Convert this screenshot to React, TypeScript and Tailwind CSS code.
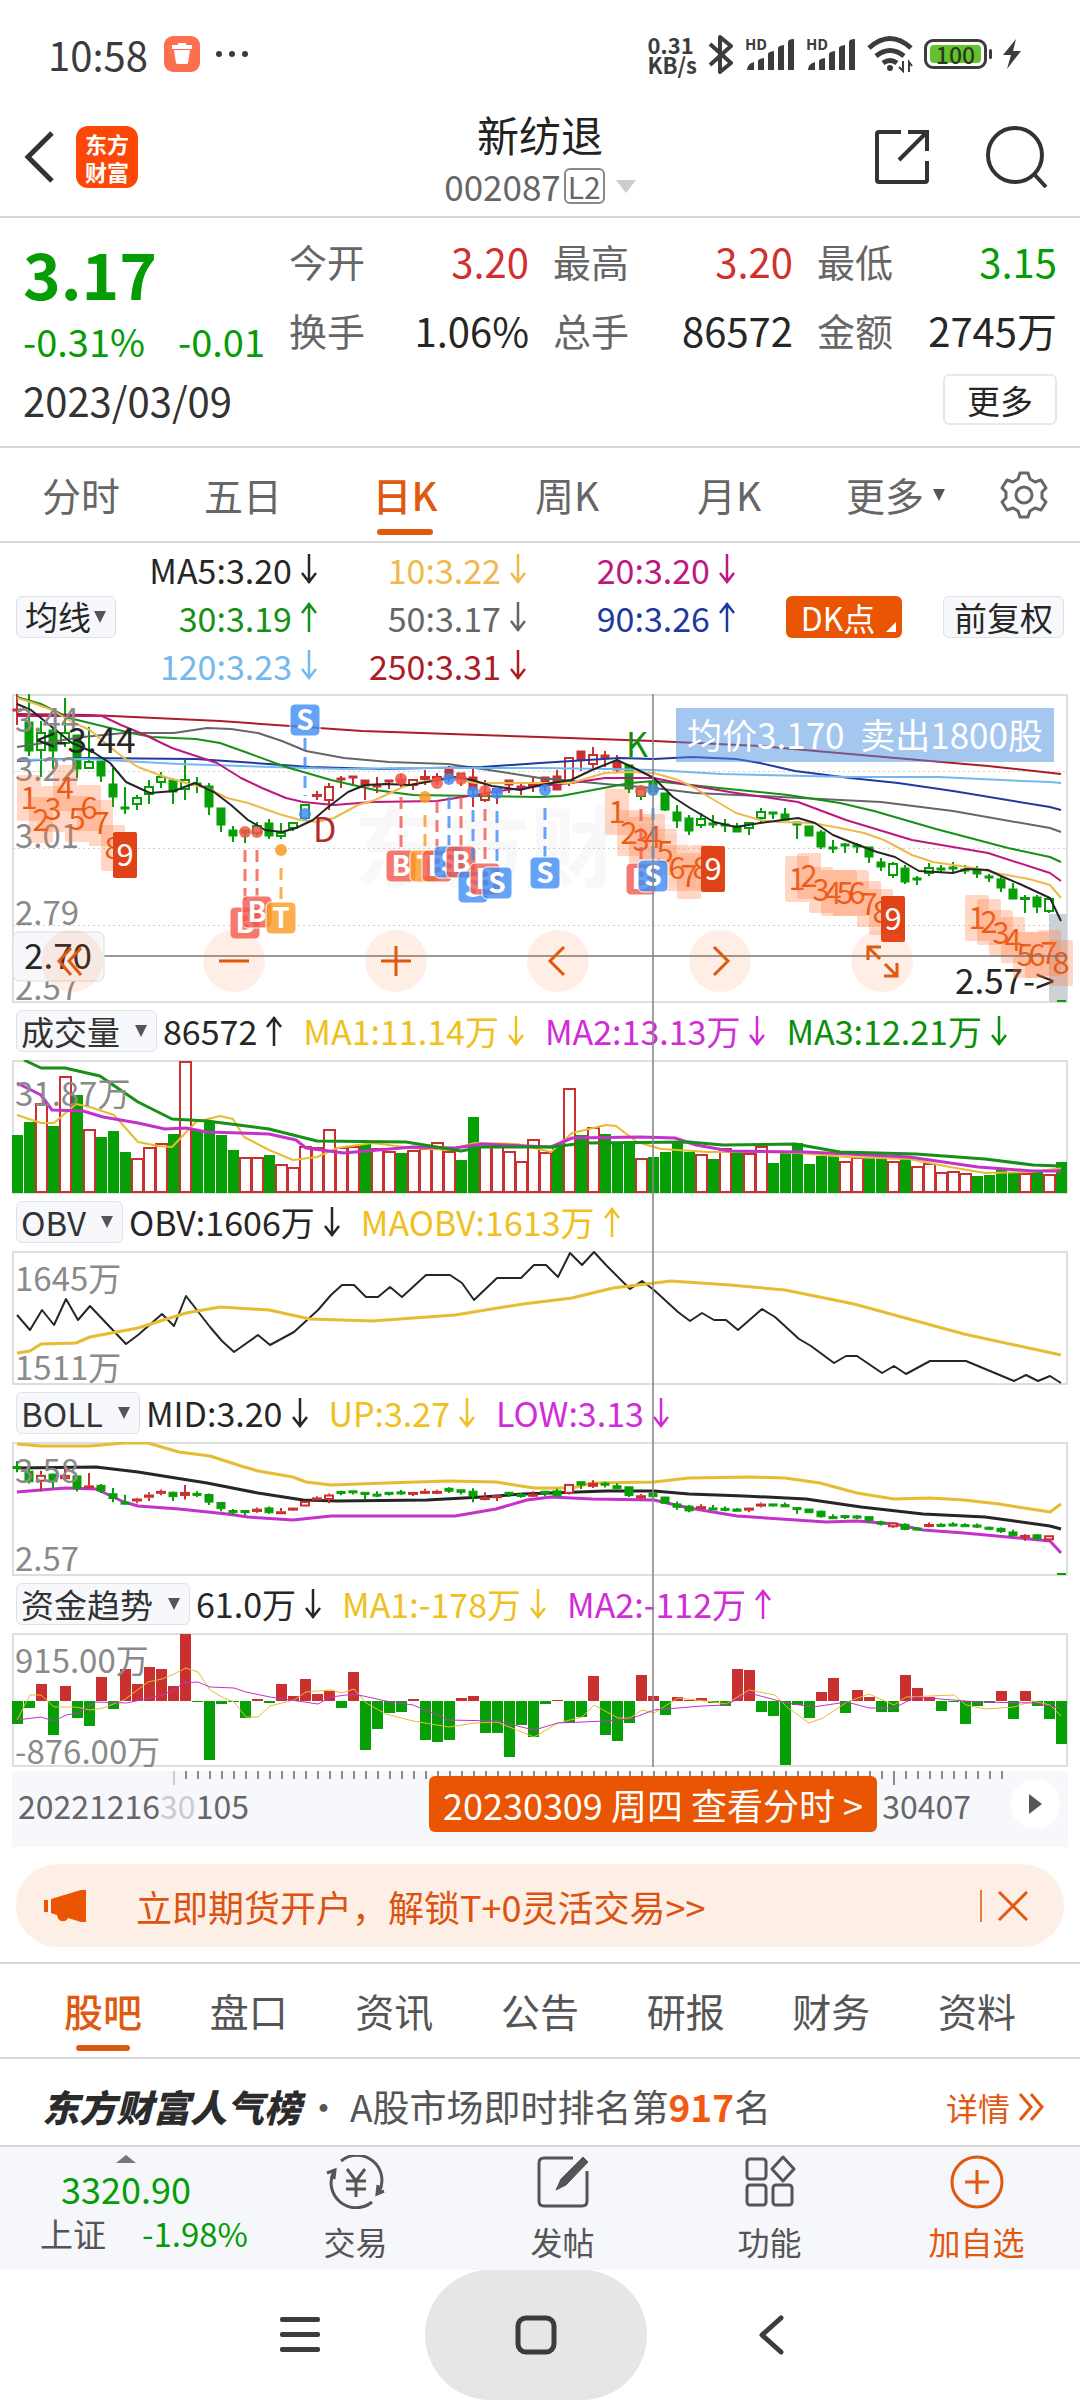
import { useState, type ReactNode } from "react";

const RED = "#c9302f";
const GREEN = "#06a006";
const YELLOW = "#e6bc30";
const PURPLE = "#c432cc";
const BLACK = "#262626";

const barX = (i: number) => 17 + i * 12;

// body top, body bottom, high, low, kind: g/r = filled, G/R = hollow
type Candle = [number, number, number, number, string];

const candles: Candle[] = [
  [15, 17, 0, 31, "r"], [28, 57, 0, 62, "g"], [38, 57, 27, 83, "G"], [36, 57, 34, 75, "g"],
  [38, 50, 4, 53, "G"], [41, 75, 41, 84, "g"], [67, 75, 33, 75, "G"], [67, 82, 63, 88, "g"],
  [90, 103, 74, 113, "g"], [113, 115, 93, 120, "g"], [103, 111, 101, 116, "G"], [92, 101, 86, 110, "G"],
  [82, 89, 78, 94, "G"], [86, 98, 84, 110, "g"], [85, 96, 66, 106, "G"], [89, 91, 83, 99, "g"],
  [92, 113, 89, 121, "g"], [114, 131, 114, 138, "g"], [136, 142, 132, 148, "g"], [136, 139, 136, 149, "g"],
  [131, 140, 128, 142, "G"], [129, 142, 125, 145, "g"], [138, 143, 129, 145, "G"], [128, 135, 128, 137, "G"],
  [110, 125, 110, 125, "G"], [100, 103, 97, 106, "R"], [92, 107, 89, 116, "R"], [84, 86, 82, 94, "r"],
  [82, 84, 82, 92, "r"], [86, 92, 86, 106, "r"], [91, 93, 83, 99, "r"], [86, 88, 86, 95, "r"],
  [85, 90, 80, 93, "r"], [85, 92, 85, 96, "R"], [82, 86, 76, 91, "R"], [82, 86, 79, 91, "R"],
  [75, 83, 72, 88, "r"], [79, 86, 79, 92, "r"], [83, 96, 75, 113, "r"], [99, 107, 86, 108, "R"],
  [94, 99, 94, 110, "R"], [86, 91, 86, 99, "r"], [92, 94, 88, 101, "r"], [90, 93, 83, 98, "R"],
  [83, 90, 83, 97, "r"], [82, 96, 76, 96, "r"], [63, 90, 63, 92, "R"], [57, 66, 57, 77, "r"],
  [60, 71, 53, 74, "R"], [61, 64, 57, 73, "r"], [68, 76, 61, 78, "r"], [71, 95, 71, 99, "g"],
  [94, 103, 91, 106, "G"], [88, 98, 85, 102, "g"], [99, 116, 99, 117, "g"], [118, 127, 111, 134, "g"],
  [124, 137, 121, 141, "g"], [124, 132, 119, 134, "G"], [129, 131, 121, 134, "g"], [130, 132, 125, 138, "g"],
  [132, 138, 129, 138, "g"], [128, 135, 128, 141, "G"], [117, 125, 114, 128, "G"], [118, 120, 118, 125, "g"],
  [120, 126, 114, 126, "g"], [128, 131, 128, 145, "g"], [132, 142, 132, 142, "g"], [138, 153, 136, 155, "g"],
  [153, 155, 146, 159, "g"], [150, 152, 149, 159, "g"], [151, 153, 149, 159, "g"], [153, 163, 153, 169, "g"],
  [168, 173, 164, 177, "g"], [169, 182, 168, 184, "G"], [174, 188, 171, 190, "g"], [184, 186, 182, 191, "g"],
  [173, 180, 169, 182, "G"], [174, 176, 171, 179, "g"], [173, 175, 168, 179, "g"], [175, 177, 171, 180, "g"],
  [176, 180, 172, 184, "g"], [182, 184, 180, 188, "g"], [185, 194, 183, 198, "g"], [195, 205, 189, 205, "g"],
  [203, 205, 201, 219, "G"], [203, 213, 201, 219, "g"], [204, 218, 204, 219, "G"],
];

const movingAverages = [
  { color: "#ab1e28", points: "17,20 90,21 220,27 362,37 540,43 654,47 760,52 884,63 988,72 1061,80" },
  { color: "#666666", points: "17,53 83,43 124,39 174,39 207,34 231,35 258,39 282,47 306,57 344,64 389,68 448,70 489,76 540,84 616,91 654,94 695,99 781,103 881,108 953,117 1050,134 1061,138" },
  { color: "#1f3a9e", points: "17,67 86,64 196,65 241,68 310,73 379,75 482,73 540,69 619,64 654,65 692,63 736,65 760,69 795,77 850,84 898,89 953,97 1050,113 1061,116" },
  { color: "#74b9ee", points: "17,66 86,65 179,70 241,72 344,75 413,74 540,74 609,75 654,76 722,80 850,83 939,83 1022,87 1050,88 1061,89" },
  { color: "#179017", points: "17,3 41,10 69,24 131,39 152,43 196,45 220,49 248,59 286,73 331,86 375,96 413,101 540,103 561,102 609,93 630,89 654,87 719,94 788,101 840,109 874,117 936,135 1008,154 1050,163 1061,168" },
  { color: "#bd1880", points: "17,22 102,22 121,31 145,41 172,54 217,69 241,84 262,94 286,104 303,108 334,111 372,108 437,107 475,101 506,96 540,92 571,89 605,84 654,84 688,91 736,99 798,108 846,126 912,146 988,159 1050,179 1061,187" },
  { color: "#f0b94e", points: "17,4 33,9 52,16 72,28 90,36 110,53 124,64 138,73 165,83 193,91 207,94 227,104 248,109 279,120 300,126 317,128 334,124 358,111 375,106 403,93 420,88 448,84 475,89 540,89 571,89 605,79 630,78 654,79 678,86 695,94 709,103 736,119 760,126 778,128 812,129 840,134 864,139 884,146 912,161 933,168 974,174 1001,180 1029,185 1050,191 1061,204" },
  { color: BLACK, points: "17,10 31,16 52,33 72,49 93,58 110,69 126,88 150,99 174,97 195,89 214,98 231,111 248,126 265,136 282,138 296,134 313,126 327,114 348,98 365,91 386,90 410,91 427,88 455,83 472,86 492,92 520,96 540,91 571,86 592,76 617,66 630,72 654,84 673,103 690,114 714,128 736,133 760,129 798,124 815,129 833,141 853,149 877,158 895,163 919,177 953,179 967,175 988,176 1001,182 1022,191 1050,204 1061,227" },
];

// x, dot y, badge y, label
const trades: [number, number, number, string][] = [
  [305, 120, 26, "S"], [245, 138, 229, "B"], [257, 138, 218, "B"], [281, 156, 224, "T"],
  [401, 85, 172, "B"], [425, 103, 172, "T"], [437, 89, 172, "B"], [449, 85, 168, "S"],
  [461, 85, 168, "B"], [473, 98, 193, "S"], [485, 97, 185, "B"], [497, 99, 189, "S"],
  [545, 96, 179, "S"], [641, 97, 185, "B"], [653, 96, 182, "S"],
];

const tradeColor: Record<string, string> = { S: "#3f8cf4", B: "#f2574a", T: "#fb9a22" };

// each run counts 1..9, given as the x of its first digit and the y of each
const countdowns: [number, number[]][] = [
  [29, [104, 126, 115, 94, 125, 114, 129, 154, 161]],
  [617, [118, 139, 146, 143, 158, 174, 182, 174, 175]],
  [797, [185, 182, 196, 199, 199, 199, 210, 218, 225]],
  [977, [224, 228, 239, 246, 261, 261, 259, 269]],
];

const volumes =
  "g75 g62 r43 g66 r16 g35 r69 g77 g71 g92 r98 r87 r83 g74 r1 g70 g61 g75 g90 r97 r97 g95 r104 r107 r86 r87 r69 r87 r86 g84 r88 r91 g93 r90 r88 r82 r91 g100 g57 r86 r83 r91 r101 r79 r92 g86 r28 g75 r67 g74 g83 g81 r98 g97 g92 g83 g92 r94 g99 r88 g93 r93 r86 g103 g92 g83 g104 g96 g96 r101 r97 g98 g99 r101 g99 r106 r103 r112 r111 r113 g116 g115 g110 g113 r113 g112 r114 g102"
    .split(" ")
    .map((v) => ({ up: v[0] === "r", top: Number(v.slice(1)) }));

const flows = [
  91, 75, 51, 102, 53, 85, 93, 44, 76, 36, 51, 34, 36, 53, 1, 69, 127, 71, 69, 85, 66, 70, 51, 63, 46, 61, 58, 75, 39,
  117, 96, 80, 79, 66, 107, 109, 107, 65, 63, 100, 100, 124, 92, 104, 71, 67, 90, 84, 43, 102, 108, 90, 42, 63, 82, 64,
  67, 65, 70, 73, 36, 37, 79, 83, 132, 72, 85, 59, 45, 80, 57, 64, 79, 79, 42, 55, 64, 78, 69, 91, 73, 70, 58, 86, 58,
  73, 86, 111,
];

function Arrow({ up }: { up?: boolean }) {
  return (
    <svg viewBox="0 0 18 32" className="h-8 w-[18px] shrink-0" fill="none" stroke="currentColor" strokeWidth="2.5">
      <path d={up ? "M9 31V2M2 12l7-9 7 9" : "M9 1v29M2 20l7 9 7-9"} />
    </svg>
  );
}

function Caret() {
  return (
    <svg viewBox="0 0 14 12" className="h-3 w-[14px] shrink-0" fill="#555">
      <path d="M1 0h12L7 12z" />
    </svg>
  );
}

function Line({ points, color, width = 2 }: { points: string; color: string; width?: number }) {
  return <polyline points={points} fill="none" stroke={color} strokeWidth={width} strokeLinejoin="round" />;
}

function Frame({ height, children }: { height: number; children: ReactNode }) {
  return (
    <svg viewBox={`0 0 1080 ${height}`} className="block w-full">
      <rect x="13" y="1" width="1054" height={height - 2} fill="none" stroke="#dedede" strokeWidth="2" />
      {children}
    </svg>
  );
}

function AxisText({ y, children }: { y: number; children: string }) {
  return (
    <text x="15" y={y} fontSize="33" fill="#8a8a8a">
      {children}
    </text>
  );
}

function CandleShape({ i, c, map = (y) => y, boll }: { i: number; c: Candle; map?: (y: number) => number; boll?: boolean }) {
  const [top, bottom, high, low, kind] = c;
  const hollow = kind === "G" || kind === "R";
  const red = boll ? hollow : kind.toLowerCase() === "r";
  const color = red ? RED : GREEN;
  const x = barX(i);
  const y = map(top);
  const h = Math.max(map(bottom) - y, 2);
  return (
    <g stroke={color} strokeWidth="2">
      <path d={`M${x} ${map(high)}V${y}M${x} ${y + h}V${map(low)}`} />
      {hollow ? (
        <rect x={x - 4} y={y + 1} width="8" height={Math.max(h - 2, 1)} fill="#fff" />
      ) : (
        <rect x={x - 4} y={y} width="8" height={h} fill={color} strokeWidth="1" />
      )}
    </g>
  );
}

function PriceChart() {
  return (
    <Frame height={309}>
      <text x="354" y="186" fontSize="88" fontWeight="700" fill="#f8f8f8">
        东方财富
      </text>
      <g stroke="#cfcfcf" strokeDasharray="2 3">
        <path d="M13 77.5H1067M13 154.5H1067M13 231.5H1067" />
      </g>
      <rect x="1049" y="220" width="18" height="88" fill="#cdd1d8" />
      {candles.map((c, i) => (
        <CandleShape key={i} i={i} c={c} />
      ))}
      <path d="M1057 307h9" stroke={GREEN} strokeWidth="2" />
      {movingAverages.map((m) => (
        <Line key={m.color} {...m} />
      ))}
      <AxisText y={38}>3.44</AxisText>
      <AxisText y={87}>3.22</AxisText>
      <AxisText y={154}>3.01</AxisText>
      <AxisText y={231}>2.79</AxisText>
      <AxisText y={306}>2.57</AxisText>
      <g fontSize="35" fill={BLACK}>
        <text x="36" y="59">&lt;-3.44</text>
        <text x="955" y="300">2.57-&gt;</text>
      </g>
      <g fontSize="31" textAnchor="middle">
        {countdowns.map(([start, ys]) =>
          ys.map((y, n) => {
            const x = start + n * 12;
            const last = n === 8;
            return (
              <g key={x}>
                <rect x={x - 12} y={y - 23} width="24" height="46" rx="2" fill={last ? "#e04318" : "#ff7a3c"} fillOpacity={last ? 1 : 0.3} />
                <text x={x} y={y + 11} fill={last ? "#fff" : "#ea5a14"}>
                  {n + 1}
                </text>
              </g>
            );
          }),
        )}
      </g>
      <text x="313" y="148" fontSize="34" fill="#b52a2a">D</text>
      <text x="626" y="63" fontSize="34" fill="#0f8f0f">K</text>
      {trades.map(([x, dot, badge, label]) => {
        const color = tradeColor[label];
        const below = badge > dot;
        return (
          <g key={x}>
            <circle cx={x} cy={dot} r="6" fill={color} fillOpacity="0.85" />
            <path
              d={below ? `M${x} ${dot + 18}V${badge - 16}` : `M${x} ${badge + 18}V${dot - 18}`}
              stroke={color}
              strokeOpacity="0.8"
              strokeWidth="3"
              strokeDasharray="12 7"
            />
            <rect x={x - 15} y={badge - 16} width="30" height="32" rx="5" fill={color} fillOpacity="0.8" stroke="#fff" />
            <text x={x} y={badge + 10} fontSize="28" fontWeight="700" fill="#fff" textAnchor="middle">
              {label}
            </text>
          </g>
        );
      })}
      <path d="M13 262H1067" stroke="#777" strokeWidth="1.5" />
      <rect x="13" y="238" width="91" height="49" rx="6" fill="#f6f8fb" stroke="#d9dde2" />
      <text x="24" y="275" fontSize="35" fill={BLACK}>2.70</text>
    </Frame>
  );
}

function VolumeChart() {
  return (
    <Frame height={134}>
      {volumes.map(({ up, top }, i) =>
        up ? (
          <rect key={i} x={barX(i) - 5} y={top + 1} width="11" height={131 - top} fill="#fff" stroke={RED} strokeWidth="2" />
        ) : (
          <rect key={i} x={barX(i) - 5} y={top} width="11" height={133 - top} fill={GREEN} />
        ),
      )}
      <Line color={YELLOW} points="17,55 41,63 54,63 76,44 90,47 114,55 138,82 158,86 172,87 196,62 220,56 233,59 244,77 269,90 293,100 317,97 337,88 372,83 413,88 448,90 475,83 517,84 551,92 572,73 606,65 616,66 637,82 661,89 709,92 758,92 799,93 847,97 909,99 950,107 985,113 1033,112 1061,108" />
      <Line color={PURPLE} width={3} points="17,23 41,35 52,50 83,51 103,57 138,63 165,69 186,68 207,72 269,74 296,80 306,88 344,93 413,87 455,88 482,84 551,87 572,78 640,77 675,78 696,85 730,91 806,92 909,97 978,107 1033,111 1061,111" />
      <Line color="#179017" width={3} points="24,0 41,8 65,8 100,16 138,42 158,52 172,59 207,61 269,69 317,81 406,82 461,91 482,87 551,87 585,83 689,82 723,85 795,84 840,92 916,94 985,99 1033,105 1061,106" />
      <AxisText y={46}>31.87万</AxisText>
    </Frame>
  );
}

function ObvChart() {
  return (
    <Frame height={134}>
      <AxisText y={40}>1645万</AxisText>
      <AxisText y={129}>1511万</AxisText>
      <Line color={BLACK} points="17,64 30,79 42,59 54,74 66,48 78,69 90,55 126,93 138,84 162,63 174,75 186,45 210,76 222,90 234,101 258,84 270,94 294,81 318,59 331,44 342,34 354,34 366,46 378,46 390,36 402,46 426,24 450,24 462,32 474,49 497,27 521,27 534,14 546,14 558,26 570,2 582,14 594,1 606,14 630,38 642,30 654,39 678,61 690,70 702,62 714,69 726,69 738,79 762,58 775,66 799,88 811,95 834,112 846,105 857,105 882,122 894,115 906,123 930,110 966,110 978,115 1014,130 1026,124 1038,130 1050,125 1061,132" />
      <Line color={YELLOW} width={3} points="17,102 30,100 41,93 76,92 90,86 138,77 186,62 220,56 269,59 310,68 372,70 455,64 523,53 572,47 613,37 671,30 730,34 785,39 854,53 964,83 1061,104" />
    </Frame>
  );
}

function BollChart() {
  return (
    <Frame height={134}>
      <Line color={BLACK} width={3} points="17,26 96,25 138,30 207,41 258,51 303,58 337,59 427,58 482,55 523,52 606,49 654,49 689,52 744,54 806,57 861,65 923,72 985,75 1050,84 1061,87" />
      <Line color={YELLOW} width={3} points="17,2 41,4 90,4 124,1 148,1 179,10 210,14 241,24 258,29 293,35 306,40 331,43 386,41 448,39 496,40 534,46 572,46 592,41 654,40 689,36 751,35 785,36 820,41 857,51 894,57 930,56 964,58 999,62 1050,70 1061,62" />
      <Line color={PURPLE} width={3} points="17,50 65,46 96,47 124,60 138,64 179,67 227,72 248,75 293,78 331,74 455,74 496,67 527,58 551,55 592,57 654,58 689,66 737,74 826,80 857,79 895,82 923,88 964,91 1050,99 1061,111" />
      {candles.map((c, i) => (
        <CandleShape key={i} i={i} c={c} map={(y) => 19 + y * 0.364} boll />
      ))}
      <path d="M1057 132h9" stroke={GREEN} strokeWidth="2" />
      <AxisText y={41}>3.58</AxisText>
      <AxisText y={129}>2.57</AxisText>
    </Frame>
  );
}

function FlowChart() {
  return (
    <Frame height={134}>
      {flows.map((y, i) => (
        <rect key={i} x={barX(i) - 5} y={Math.min(y, 68)} width="11" height={Math.abs(y - 68)} fill={y < 68 ? RED : GREEN} />
      ))}
      <Line color={YELLOW} width={1} points="17,87 30,62 41,62 54,74 76,74 90,77 103,75 124,67 148,49 162,46 174,41 186,35 198,39 210,57 222,64 234,69 246,84 258,84 270,73 294,67 306,59 331,57 342,60 354,56 366,70 386,81 413,88 449,94 475,90 497,89 534,104 558,90 582,84 594,72 618,85 630,85 642,77 654,80 678,65 714,69 726,71 749,57 775,62 787,74 809,90 823,85 847,69 869,61 894,72 906,64 954,62 966,72 985,76 1014,74 1033,68 1050,72 1061,83" />
      <Line color={PURPLE} width={1} points="17,87 41,84 54,88 66,82 78,80 96,69 127,70 162,62 174,57 183,50 198,49 210,54 234,55 246,59 270,64 318,71 331,64 354,61 386,68 413,72 449,87 497,88 534,97 558,90 606,88 630,86 654,77 702,73 726,72 749,60 787,70 813,74 847,69 869,75 894,75 916,64 978,69 1033,70 1061,75" />
      <AxisText y={40}>915.00万</AxisText>
      <AxisText y={131}>-876.00万</AxisText>
    </Frame>
  );
}

interface LegendItem {
  text: string;
  up?: boolean;
  className: string;
}

function Panel({ name, items, children }: { name: string; items: LegendItem[]; children: ReactNode }) {
  return (
    <section>
      <div className="flex h-[57px] items-center gap-5 pb-[2px] pl-4 text-[34px] leading-10">
        <div className="flex items-center gap-[6px]">
          <button className="flex h-[42px] items-center gap-[14px] rounded-md border border-[#dfe2e6] bg-[#f6f8fb] pl-1 pr-2 text-[33px] text-[#333]">
            {name}
            <Caret />
          </button>
          <LegendText {...items[0]} />
        </div>
        {items.slice(1).map((item) => (
          <LegendText key={item.text} {...item} />
        ))}
      </div>
      {children}
    </section>
  );
}

function LegendText({ text, up, className }: LegendItem) {
  return (
    <span className={`flex items-center gap-2 whitespace-nowrap ${className}`}>
      {text}
      <Arrow up={up} />
    </span>
  );
}

function StatusBar() {
  return (
    <div className="flex h-[108px] items-center justify-between pl-12 pr-[59px] text-[#3c3c3c]">
      <div className="flex items-center gap-4">
        <span className="text-[40px] leading-10">10:58</span>
        <svg viewBox="0 0 36 36" className="size-9">
          <rect width="36" height="36" rx="9" fill="#fc7050" />
          <path d="M8 9h20v4H8zM14 7h8v3h-8zM10 14h16l-2 13q0 1-2 1h-8q-2 0-2-1z" fill="#fff" />
        </svg>
        <svg viewBox="0 0 34 6" className="h-[6px] w-[34px]" fill="currentColor">
          <circle cx="3" cy="3" r="3" />
          <circle cx="16" cy="3" r="3" />
          <circle cx="29" cy="3" r="3" />
        </svg>
      </div>
      <div className="flex items-center gap-[11px]">
        <div className="text-[22px] font-bold leading-5">
          0.31
          <br />
          KB/s
        </div>
        <svg viewBox="0 0 26 40" className="h-10 w-[26px]" fill="none" stroke="currentColor" strokeWidth="4" strokeLinejoin="round">
          <path d="M2 10l21 19-11 9V3l11 9L2 31" />
        </svg>
        <Signal />
        <Signal />
        <svg viewBox="0 0 46 38" className="h-[38px] w-[46px]" fill="none" stroke="currentColor" strokeWidth="5">
          <path d="M2 13q21-19 42 0M9 21q14-11 28 0M16 28q7-5 14 0" />
          <circle cx="23" cy="33" r="3" fill="currentColor" stroke="none" />
          <path d="M36 26v10l-4-4M42 37V27l3 4" strokeWidth="2" />
        </svg>
        <div className="flex items-center gap-[2px]">
          <div className="flex h-[30px] w-[63px] items-center rounded-[9px] border-3 border-[#3c3c3c] p-[3px]">
            <span className="flex h-full w-full items-center justify-center rounded-[4px] bg-[#64c32c] text-[23px] font-medium leading-5 text-[#2b3b22]">
              100
            </span>
          </div>
          <span className="h-[10px] w-[3px] rounded-full bg-[#3c3c3c]" />
        </div>
        <svg viewBox="0 0 18 30" className="h-[30px] w-[18px]" fill="currentColor">
          <path d="M13 0L0 16h8L4 30 18 12h-8z" />
        </svg>
      </div>
    </div>
  );
}

function Signal() {
  return (
    <div className="relative h-9 w-[50px]">
      <svg viewBox="0 0 50 36" className="h-9 w-[50px]" fill="currentColor">
        <path d="M2 34q0-6 7-8v8zM13 34V25q0-2 6-3v12zM23 34V18q0-2 6-3v19zM33 34V12q0-2 6-3v25zM43 34V6q0-3 6-3v31z" />
      </svg>
      <span className="absolute left-0 top-0 text-[15px] font-bold leading-4">HD</span>
    </div>
  );
}

function Header() {
  return (
    <header className="grid h-[110px] grid-cols-3 items-center border-b-2 border-[#d8d8d8] px-6 pb-3">
      <div className="flex items-center gap-[22px]">
        <button aria-label="返回">
          <svg viewBox="0 0 30 52" className="h-[52px] w-[30px]" fill="none" stroke="#333" strokeWidth="5">
            <path d="M28 2L4 26l24 24" />
          </svg>
        </button>
        <div className="w-[62px] rounded-xl bg-[#fd4706] py-[3px] text-center text-[22px] font-bold leading-7 text-white">
          东方
          <br />
          财富
        </div>
      </div>
      <div className="flex flex-col items-center gap-[6px]">
        <h1 className="text-[42px] leading-[52px] text-[#222]">新纺退</h1>
        <button className="flex items-center gap-[3px] text-[35px] leading-10 text-[#666]">
          002087
          <span className="rounded-md border-2 border-[#888] px-[2px] text-[30px] leading-8">L2</span>
          <svg viewBox="0 0 20 13" className="ml-2 h-[13px] w-5" fill="#ccc">
            <path d="M0 0h20L10 13z" />
          </svg>
        </button>
      </div>
      <div className="flex items-center justify-end gap-14 pr-[7px]">
        <button aria-label="分享">
          <svg viewBox="0 0 54 54" className="size-[54px]" fill="none" stroke="#333" strokeWidth="4">
            <path d="M26 2H4q-2 0-2 2v46q0 2 2 2h46q2 0 2-2V31M33 2h19v19M52 2L24 30" />
          </svg>
        </button>
        <button aria-label="搜索">
          <svg viewBox="0 0 64 64" className="size-16" fill="none" stroke="#333" strokeWidth="4">
            <circle cx="30" cy="30" r="27" />
            <path d="M49 49l12 13" />
          </svg>
        </button>
      </div>
    </header>
  );
}

const quotes = [
  { label: "今开", value: "3.20", className: "text-[#d2302f]" },
  { label: "最高", value: "3.20", className: "text-[#d2302f]" },
  { label: "最低", value: "3.15", className: "text-[#069c06]" },
  { label: "换手", value: "1.06%", className: "text-[#262626]" },
  { label: "总手", value: "86572", className: "text-[#262626]" },
  { label: "金额", value: "2745万", className: "text-[#262626]" },
];

function Quote() {
  return (
    <section className="border-b-2 border-[#d8d8d8] px-[23px] pb-[21px] pt-2">
      <div className="flex gap-6">
        <div className="w-[242px] shrink-0 text-[#069c06]">
          <div className="text-[64px] font-bold leading-[92px]">3.17</div>
          <div className="flex justify-between text-[38px] leading-[46px]">
            <span>-0.31%</span>
            <span>-0.01</span>
          </div>
        </div>
        <dl className="grid grow grid-cols-3 gap-x-6">
          {quotes.map((q) => (
            <div key={q.label} className="flex h-[69px] items-center justify-between">
              <dt className="text-[38px] text-[#666]">{q.label}</dt>
              <dd className={`text-[40px] ${q.className}`}>{q.value}</dd>
            </div>
          ))}
        </dl>
      </div>
      <div className="flex items-center justify-between pt-[10px]">
        <span className="text-[40px] leading-10 text-[#333]">2023/03/09</span>
        <button className="h-[51px] w-[114px] rounded-md border-2 border-[#e6e8ea] text-[33px] leading-8 text-[#262626]">更多</button>
      </div>
    </section>
  );
}

function ChartTabs() {
  const [active, setActive] = useState("日K");
  return (
    <nav className="flex h-[95px] items-center border-b-2 border-[#d8d8d8] text-[39px] text-[#666]">
      {["分时", "五日", "日K", "周K", "月K"].map((t) => (
        <button
          key={t}
          onClick={() => setActive(t)}
          className={`relative flex h-full w-[15%] items-center justify-center ${t === active ? "font-medium text-[#df5a11]" : ""}`}
        >
          {t}
          {t === active && <span className="absolute bottom-[6px] h-[6px] w-14 rounded-full bg-[#df5a11]" />}
        </button>
      ))}
      <button className="ml-9 flex items-center gap-2">
        更多
        <Caret />
      </button>
      <button aria-label="设置" className="ml-auto mr-8">
        <svg viewBox="0 0 48 48" className="size-12" fill="none" stroke="#666" strokeWidth="3" strokeLinejoin="round">
          <path d="M20 2h8l2 6 5 3 6-2 5 8-4 4v6l4 4-5 8-6-2-5 3-2 6h-8l-2-6-5-3-6 2-5-8 4-4v-6l-4-4 5-8 6 2 5-3z" />
          <circle cx="24" cy="24" r="8" />
        </svg>
      </button>
    </nav>
  );
}

const averages: LegendItem[] = [
  { text: "MA5:3.20", className: "text-[#262626]" },
  { text: "10:3.22", className: "text-[#f0b94e]" },
  { text: "20:3.20", className: "text-[#bd1880]" },
  { text: "30:3.19", up: true, className: "text-[#179017]" },
  { text: "50:3.17", className: "text-[#666]" },
  { text: "90:3.26", up: true, className: "text-[#1f3a9e]" },
  { text: "120:3.23", className: "text-[#74b9ee]" },
  { text: "250:3.31", className: "text-[#ab1e28]" },
];

function AverageLegend() {
  return (
    <div className="flex items-center px-4 pb-[5px] pt-[2px]">
      <button className="flex h-[42px] items-center gap-[2px] whitespace-nowrap rounded-md border border-[#dfe2e6] bg-[#f6f8fb] px-2 text-[33px] text-[#262626]">
        均线
        <Caret />
      </button>
      <div className="grid grid-cols-[202px_209px_209px] text-[34px]">
        {averages.map((a) => (
          <div key={a.text} className="flex h-12 items-center justify-end">
            <LegendText {...a} />
          </div>
        ))}
      </div>
      <button className="relative ml-[50px] h-[42px] w-[116px] whitespace-nowrap rounded-md bg-[#ea5504] pr-3 text-[32px] leading-10 text-white">
        DK点
        <span className="absolute bottom-[6px] right-[6px] border-b-10 border-l-10 border-b-white border-l-transparent" />
      </button>
      <button className="ml-auto h-[42px] whitespace-nowrap rounded-md border border-[#dfe2e6] bg-[#f6f8fb] px-[10px] text-[33px] leading-10 text-[#262626]">
        前复权
      </button>
    </div>
  );
}

const chartButtons = [
  { label: "最左", d: "M30 18L18 31l12 14M40 18L28 31l12 14" },
  { label: "缩小", d: "M16 31h30" },
  { label: "放大", d: "M16 31h30M31 16v30" },
  { label: "左移", d: "M37 17L23 31l14 14" },
  { label: "右移", d: "M25 17l14 14-14 14" },
  { label: "全屏", d: "M17 30V17h13M17 17l12 12M46 33v13H33M46 46L34 34" },
];

function ChartControls() {
  return (
    <div className="absolute bottom-[11px] left-[41px] flex gap-[100px]">
      {chartButtons.map((b) => (
        <button key={b.label} aria-label={b.label} className="size-[62px] rounded-full bg-[#ff7030]/12">
          <svg viewBox="0 0 62 62" fill="none" stroke="#e0590f" strokeWidth="3">
            <path d={b.d} />
          </svg>
        </button>
      ))}
    </div>
  );
}

function TimeAxis() {
  const ticks = Array.from({ length: 70 }, (_, n) => 174 + n * 12);
  return (
    <div className="relative mx-3 mt-1 h-[76px] bg-[#f7f8fb]">
      <svg viewBox="12 0 1056 14" className="block w-full" stroke="#8a8a8a" strokeWidth="2">
        {ticks.map((x, n) => (
          <path key={x} d={`M${x} 0v${n % 30 === 0 ? 14 : 8}`} strokeOpacity={n === 0 ? 0.4 : 1} />
        ))}
      </svg>
      <div className="flex items-center pl-[6px] text-[32px] leading-[40px] text-[#666]">
        <span>20221216</span>
        <span>
          <span className="opacity-30">30</span>105
        </span>
      </div>
      <span className="absolute right-[97px] top-[14px] text-[32px] leading-[40px] text-[#666]">30407</span>
      <button className="absolute left-[417px] top-[5px] h-14 w-[448px] whitespace-nowrap rounded-md bg-[#ea5504] text-[36px] leading-[48px] text-white">
        20230309 周四 查看分时 &gt;
      </button>
      <button aria-label="播放" className="absolute right-2 top-2 size-[50px] rounded-full bg-white">
        <svg viewBox="0 0 50 50" fill="#555">
          <path d="M19 15l13 10-13 10z" />
        </svg>
      </button>
    </div>
  );
}

function Banner() {
  return (
    <div className="mx-4 mb-[15px] mt-[17px] flex h-[83px] items-center rounded-full bg-[#fdeee6] pl-7 pr-9 text-[#dc5310]">
      <svg viewBox="0 0 42 34" className="h-[34px] w-[42px]" fill="#ea5504">
        <path d="M0 11h4v12H0zM7 10L37 1h5v32h-5L24 29q-2 4-6 3-4 0-5-6l-6-2z" />
      </svg>
      <a href="#" className="ml-[50px] grow text-[36px]">
        立即期货开户，解锁T+0灵活交易&gt;&gt;
      </a>
      <span className="mr-4 h-8 w-[2px] bg-[#ea7a3c]" />
      <button aria-label="关闭">
        <svg viewBox="0 0 30 30" className="size-[30px]" fill="none" stroke="#e0590f" strokeWidth="3">
          <path d="M1 1l28 28M29 1L1 29" />
        </svg>
      </button>
    </div>
  );
}

function InfoTabs() {
  const [active, setActive] = useState("股吧");
  return (
    <nav className="flex h-[97px] justify-between border-y-2 border-[#d8d8d8] px-16 text-[39px] text-[#555]">
      {["股吧", "盘口", "资讯", "公告", "研报", "财务", "资料"].map((t) => (
        <button
          key={t}
          onClick={() => setActive(t)}
          className={`relative flex h-full items-center ${t === active ? "font-medium text-[#df5a11]" : ""}`}
        >
          {t}
          {t === active && <span className="absolute inset-x-3 bottom-[6px] h-[6px] rounded-full bg-[#df5a11]" />}
        </button>
      ))}
    </nav>
  );
}

function Ranking() {
  return (
    <div className="flex h-[88px] items-center border-b-2 border-[#d8d8d8] pl-[42px] pr-9 pt-[10px] text-[37px] text-[#555]">
      <strong className="font-black italic text-[#2b2b2b]">东方财富人气榜</strong>
      <span className="px-1">·</span>
      <span className="grow pl-1">
        A股市场即时排名第<b className="text-[#f25a14]">917</b>名
      </span>
      <a href="#" className="flex items-center gap-2 text-[32px] text-[#e0590f]">
        详情
        <svg viewBox="0 0 26 28" className="h-7 w-[26px]" fill="none" stroke="currentColor" strokeWidth="3">
          <path d="M2 1l11 13L2 27M13 1l11 13-11 13" />
        </svg>
      </a>
    </div>
  );
}

function ActionButton({ label, accent, children }: { label: string; accent?: boolean; children: ReactNode }) {
  return (
    <button className={`flex flex-1 flex-col items-center gap-2 pt-2 text-[32px] leading-[48px] ${accent ? "text-[#e0590f]" : "text-[#555]"}`}>
      <svg viewBox="0 0 60 54" className="h-[54px] w-[60px]" fill="none" stroke="currentColor" strokeWidth="3">
        {children}
      </svg>
      {label}
    </button>
  );
}

function BottomBar() {
  return (
    <footer className="flex h-[123px] bg-[#f6f7fa]">
      <button className="flex w-[252px] flex-col items-center text-[#069c06]">
        <svg viewBox="0 0 20 8" className="mt-2 h-2 w-5" fill="#777">
          <path d="M10 0l10 8H0z" />
        </svg>
        <span className="text-[36px] leading-[50px]">3320.90</span>
        <span className="flex w-full justify-between pl-10 pr-1 text-[33px] leading-10">
          <span className="text-[#555]">上证</span>
          <span>-1.98%</span>
        </span>
      </button>
      <ActionButton label="交易">
        <path d="M15 6a25 25 0 0 1 38 31M46 47A25 25 0 0 1 8 16M1 18l8-3-1 9M58 36l-7 3 1-9M21 14l9 12 9-12M30 26v16M20 26h20M20 34h20" />
      </ActionButton>
      <ActionButton label="发帖">
        <path d="M40 3H11q-5 0-5 5v38q0 5 5 5h38q5 0 5-5V16" />
        <path d="M23 35l5-11L50 2l5 5-22 23z" fill="currentColor" strokeWidth="1" />
      </ActionButton>
      <ActionButton label="功能">
        <rect x="7" y="4" width="19" height="20" rx="3" />
        <rect x="7" y="30" width="19" height="20" rx="3" />
        <rect x="33" y="30" width="19" height="20" rx="3" />
        <path d="M43 2l11 12-11 12-11-12z" strokeLinejoin="round" />
      </ActionButton>
      <ActionButton label="加自选" accent>
        <circle cx="30" cy="27" r="25" />
        <path d="M18 27h24M30 15v24" />
      </ActionButton>
    </footer>
  );
}

function SystemNav() {
  return (
    <div className="flex h-[130px] items-center justify-center bg-white pr-4">
      <button aria-label="菜单" className="mr-[105px]">
        <svg viewBox="0 0 40 36" className="h-9 w-10" fill="#3c3c3c">
          <rect width="40" height="5" rx="2" />
          <rect y="15" width="40" height="5" rx="2" />
          <rect y="30" width="40" height="5" rx="2" />
        </svg>
      </button>
      <button aria-label="主页" className="flex h-full w-[222px] items-center justify-center rounded-full bg-[#e6e6e6]">
        <svg viewBox="0 0 42 40" className="h-10 w-[42px]" fill="none" stroke="#3c3c3c" strokeWidth="5">
          <rect x="3" y="3" width="36" height="34" rx="8" />
        </svg>
      </button>
      <button aria-label="返回" className="ml-[111px]">
        <svg viewBox="0 0 26 40" className="h-10 w-[26px]" fill="none" stroke="#3c3c3c" strokeWidth="5" strokeLinecap="round" strokeLinejoin="round">
          <path d="M23 3L4 20l19 17" />
        </svg>
      </button>
    </div>
  );
}

export default function App() {
  return (
    <main className="bg-white font-['Noto_Sans_CJK_SC',sans-serif] text-[#262626]">
      <StatusBar />
      <Header />
      <Quote />
      <ChartTabs />
      <AverageLegend />
      <div className="relative">
        <div className="relative">
          <PriceChart />
          <div className="absolute right-[26px] top-[14px] h-[54px] w-[378px] whitespace-pre bg-[#4a8fe2]/50 text-center text-[35px] leading-[52px] text-white">
            均价3.170  卖出1800股
          </div>
          <ChartControls />
        </div>
        <Panel
          name="成交量"
          items={[
            { text: "86572", up: true, className: "text-[#262626]" },
            { text: "MA1:11.14万", className: "text-[#f0c020]" },
            { text: "MA2:13.13万", className: "text-[#d02cd8]" },
            { text: "MA3:12.21万", className: "text-[#0a8f0a]" },
          ]}
        >
          <VolumeChart />
        </Panel>
        <Panel
          name="OBV"
          items={[
            { text: "OBV:1606万", className: "text-[#262626]" },
            { text: "MAOBV:1613万", up: true, className: "text-[#f0c020]" },
          ]}
        >
          <ObvChart />
        </Panel>
        <Panel
          name="BOLL"
          items={[
            { text: "MID:3.20", className: "text-[#262626]" },
            { text: "UP:3.27", className: "text-[#f0c020]" },
            { text: "LOW:3.13", className: "text-[#d02cd8]" },
          ]}
        >
          <BollChart />
        </Panel>
        <Panel
          name="资金趋势"
          items={[
            { text: "61.0万", className: "text-[#262626]" },
            { text: "MA1:-178万", className: "text-[#f0c020]" },
            { text: "MA2:-112万", up: true, className: "text-[#d02cd8]" },
          ]}
        >
          <FlowChart />
        </Panel>
        <div className="absolute inset-y-0 left-[60.4%] w-[2px] bg-[#888]/80" />
      </div>
      <TimeAxis />
      <Banner />
      <InfoTabs />
      <Ranking />
      <BottomBar />
      <SystemNav />
    </main>
  );
}
